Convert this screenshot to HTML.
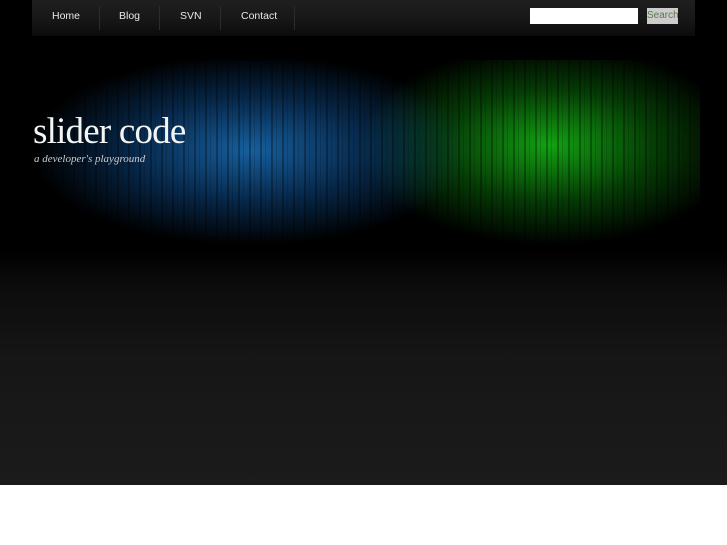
<!DOCTYPE html>
<html><head><style>
html,body{margin:0;padding:0;width:727px;height:545px;overflow:hidden;background:#fff;font-family:"Liberation Sans",sans-serif}
#top{position:absolute;left:0;top:0;width:727px;height:485px;background:linear-gradient(#000 0,#000 250px,#0d0d0d 290px,#161616 360px,#1b1b1b 485px)}
#nav{position:absolute;left:32px;top:0;width:663px;height:36px;background:linear-gradient(#1f1f1f,#171717 55%,#0b0b0b)}
.n{position:absolute;top:10px;color:#e8e8e8;font-size:10.5px}
.s{position:absolute;top:6px;width:1px;height:24px;background:#2c2c2c}
#band{position:absolute;left:40px;top:60px;width:660px;height:185px;
background:
radial-gradient(ellipse 220px 95px at 210px 90px,rgba(25,105,175,.9),rgba(12,70,130,.55) 55%,transparent 100%),
radial-gradient(ellipse 190px 100px at 510px 85px,rgba(20,170,20,.95),rgba(10,110,10,.55) 55%,transparent 100%);}
#lines{position:absolute;left:40px;top:60px;width:660px;height:185px;
background:repeating-linear-gradient(90deg,rgba(0,0,0,.3) 0 2px,transparent 2px 5px,rgba(0,0,0,.15) 5px 6px,transparent 6px 11px)}
h1{position:absolute;left:33px;top:110px;margin:0;font:normal 37px "Liberation Serif",serif;color:#f4f4f4;letter-spacing:-.8px}
p{position:absolute;left:34px;top:153px;margin:0;font:italic 11px "Liberation Serif",serif;color:#ccc}
#in{position:absolute;left:530px;top:8px;width:108px;height:16px;background:#fff}
#btn{position:absolute;left:647px;top:8px;width:31px;height:16px;background:#ccc;color:#5a7a50;font-size:10px;line-height:15px;text-align:center;overflow:hidden}
</style></head><body>
<div id="top"></div>
<div id="band"></div><div id="lines"></div>
<div id="nav">
<span class="n" style="left:20px">Home</span><div class="s" style="left:67px"></div>
<span class="n" style="left:87px">Blog</span><div class="s" style="left:127px"></div>
<span class="n" style="left:148px">SVN</span><div class="s" style="left:188px"></div>
<span class="n" style="left:209px">Contact</span><div class="s" style="left:262px"></div>
</div>
<div id="in"></div><div id="btn">Search</div>
<h1>slider code</h1>
<p>a developer's playground</p>
</body></html>
